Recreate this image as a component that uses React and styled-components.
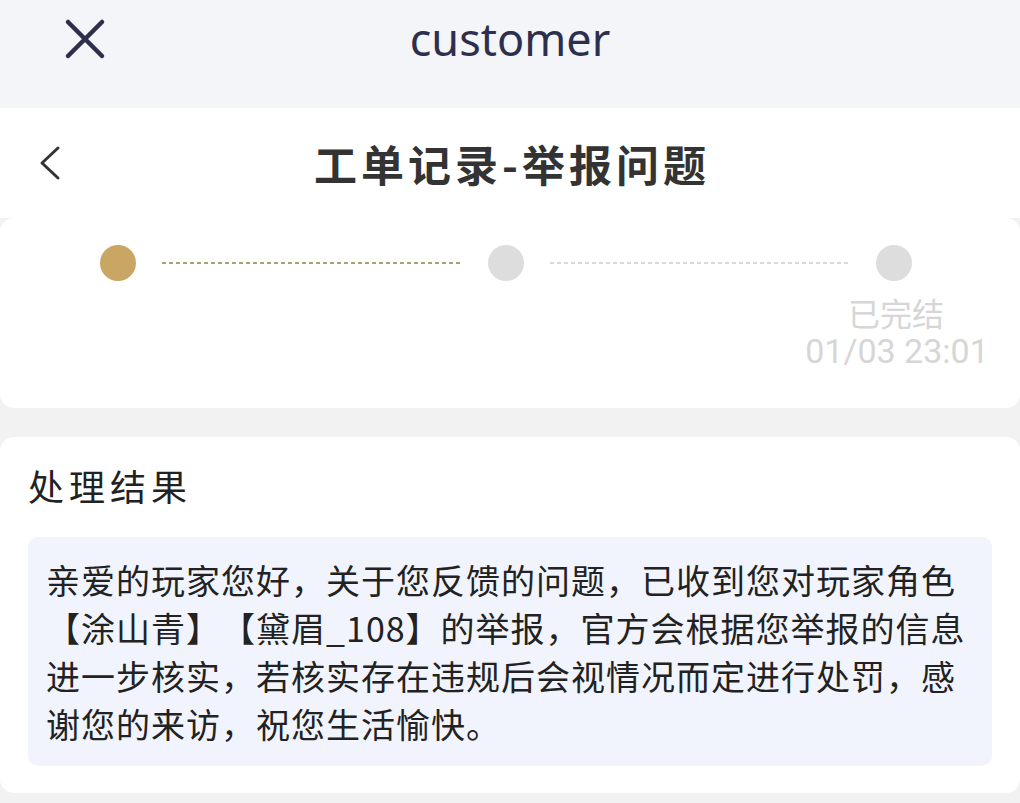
import React from "react";
import styled, { createGlobalStyle } from "styled-components";

const Global = createGlobalStyle`
  html, body { margin: 0; padding: 0; background: #f2f2f2; }
  body { font-family: "Noto Sans", "Noto Sans CJK SC", sans-serif; }
  * { box-sizing: border-box; }
`;

const Page = styled.div`
  width: 1020px;
  min-height: 803px;
  background: #f2f2f2;
  display: flex;
  flex-direction: column;
`;

const TopBar = styled.header`
  height: 108px;
  background: #f3f5f9;
  display: grid;
  grid-template-columns: 1fr auto 1fr;
  align-items: center;
  align-content: start;
  padding: 0 0 30px;
`;

const CloseBtn = styled.div`
  height: 78px;
  display: flex;
  align-items: center;
  padding-left: 64px;
  color: #2d2f4c;
`;

const AppTitle = styled.div`
  height: 78px;
  display: flex;
  align-items: center;
  font-family: "Noto Sans", sans-serif;
  font-size: 45px;
  color: #2d2f4c;
  padding-bottom: 2px;
`;

const NavBar = styled.nav`
  height: 110px;
  background: #ffffff;
  display: grid;
  grid-template-columns: 1fr auto 1fr;
  align-items: center;
`;

const BackBtn = styled.div`
  display: flex;
  align-items: center;
  padding-left: 38px;
  color: #333;
`;

const NavTitle = styled.h1`
  margin: 0;
  font-family: "Noto Sans CJK SC", sans-serif;
  font-weight: 700;
  font-size: 43px;
  letter-spacing: 4px;
  margin-right: -4px;
  color: #333333;
  line-height: 1;
`;

const Card = styled.section`
  background: #ffffff;
  border-radius: 14px;
  margin-bottom: ${(p) => p.$gap || 0}px;
  padding: ${(p) => p.$pad || 0};
  height: ${(p) => (p.$h ? `${p.$h}px` : "auto")};
`;

const Steps = styled.div`
  display: flex;
  align-items: flex-start;
  padding: 27px 108px 0 100px;
`;

const Step = styled.div`
  width: 36px;
  display: flex;
  flex-direction: column;
  align-items: center;
`;

const Dot = styled.div`
  width: 36px;
  height: 36px;
  border-radius: 50%;
  background: ${(p) => (p.$active ? "#c9a663" : "#dddddd")};
  flex-shrink: 0;
`;

const Connector = styled.div`
  flex: 1;
  height: 2px;
  margin: 17px 26px 0 26px;
  background: repeating-linear-gradient(
    to right,
    ${(p) => p.$color} 0 4px,
    transparent 4px 7px
  );
`;

const StepLabel = styled.div`
  white-space: nowrap;
  font-family: "Noto Sans CJK SC", sans-serif;
  font-size: 32px;
  line-height: 38px;
  color: #d6d6d6;
  margin-top: ${(p) => p.$mt || 0}px;
  margin-left: 4px;
`;

const StepTime = styled.div`
  white-space: nowrap;
  font-family: Roboto, "Noto Sans", sans-serif;
  font-size: 34px;
  line-height: 40px;
  color: #d6d6d6;
  margin-left: 6px;
`;

const SectionTitle = styled.h2`
  margin: 0 0 30px;
  font-family: "Noto Sans CJK SC", sans-serif;
  font-weight: 400;
  font-size: 36px;
  letter-spacing: 5px;
  line-height: 44px;
  color: #222222;
`;

const ResultBox = styled.div`
  background: #f1f4fc;
  border-radius: 10px;
  padding: 19px 18px 18px 18px;
  font-family: "Noto Sans CJK SC", sans-serif;
  font-size: 34px;
  letter-spacing: 1px;
  line-height: 48px;
  color: #222222;
  text-spacing-trim: space-all;
`;

const CloseIcon = () => (
  <svg width="42" height="42" viewBox="0 0 42 42" fill="none">
    <path d="M4 4 L38 38 M38 4 L4 38" stroke="currentColor" strokeWidth="4.5" strokeLinecap="round" />
  </svg>
);

const BackIcon = () => (
  <svg width="26" height="36" viewBox="0 0 26 36" fill="none">
    <path d="M20 3 L4 18 L20 33" stroke="currentColor" strokeWidth="3" strokeLinecap="round" strokeLinejoin="round" />
  </svg>
);

export default function App() {
  return (
    <>
      <Global />
      <Page>
        <TopBar>
          <CloseBtn>
            <CloseIcon />
          </CloseBtn>
          <AppTitle>customer</AppTitle>
          <div />
        </TopBar>
        <NavBar>
          <BackBtn>
            <BackIcon />
          </BackBtn>
          <NavTitle>工单记录-举报问题</NavTitle>
          <div />
        </NavBar>
        <Card $h={190} $gap={29}>
          <Steps>
            <Step>
              <Dot $active />
            </Step>
            <Connector $color="#a7a274" />
            <Step>
              <Dot />
            </Step>
            <Connector $color="#d9d9d9" />
            <Step>
              <Dot />
              <StepLabel $mt={12}>已完结</StepLabel>
              <StepTime>01/03 23:01</StepTime>
            </Step>
          </Steps>
        </Card>
        <Card $pad="26px 28px 27px">
          <SectionTitle>处理结果</SectionTitle>
          <ResultBox>
            亲爱的玩家您好，关于您反馈的问题，已收到您对玩家角色【涂山青】【黛眉_108】的举报，官方会根据您举报的信息进一步核实，若核实存在违规后会视情况而定进行处罚，感谢您的来访，祝您生活愉快。
          </ResultBox>
        </Card>
      </Page>
    </>
  );
}
